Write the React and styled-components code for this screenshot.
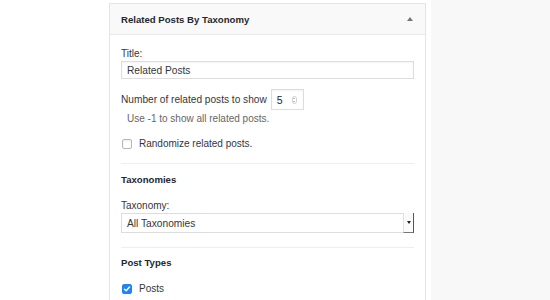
import React from "react";
import styled, { createGlobalStyle } from "styled-components";

const Global = createGlobalStyle`
  html, body { margin: 0; padding: 0; background: #fff; }
  body { font-family: "Liberation Sans", Arial, sans-serif; color: #23282d; }
  * { box-sizing: border-box; }
`;

const Page = styled.div`
  width: 550px;
  height: 300px;
  display: flex;
  background: #fff;
  overflow: hidden;
`;

const Gutter = styled.div`
  width: 109px;
  flex: none;
`;

const SideColumn = styled.div`
  flex: 1;
  margin-left: 5px;
  background: #f8f8f8;
`;

const Widget = styled.section`
  width: 317px;
  flex: none;
  margin-top: 3px;
  border: 1px solid #e5e5e5;
  border-bottom: none;
  background: #fff;
  box-shadow: 0 1px 1px rgba(0, 0, 0, 0.04);
`;

const Header = styled.header`
  height: 31px;
  display: flex;
  align-items: center;
  justify-content: space-between;
  padding: 0 12px 0 11px;
  background: #f9f9f9;
  border-bottom: 1px solid #e8e8e8;
`;

const HeaderTitle = styled.h3`
  margin: 0;
  font-size: 9.6px;
  font-weight: 700;
  color: #23282d;
`;

const Toggle = styled.span`
  width: 0;
  height: 0;
  margin-top: -1px;
  border-left: 3px solid transparent;
  border-right: 3px solid transparent;
  border-bottom: 4px solid #72777c;
`;

const Body = styled.div`
  padding: 13px 11px 0 11px;
  display: flex;
  flex-direction: column;
`;

const Label = styled.label`
  display: block;
  font-size: 10px;
  line-height: 12px;
  color: #32373c;
  margin-top: ${(p) => p.$mt || 0}px;
`;

const TextInput = styled.div`
  height: 18px;
  margin-top: 1px;
  border: 1px solid #dddddd;
  box-shadow: inset 0 1px 2px rgba(0, 0, 0, 0.05);
  padding: 0 5px;
  display: flex;
  align-items: center;
  font-size: 10.2px;
  color: #32373c;
`;

const NumberRow = styled.div`
  display: flex;
  align-items: center;
  gap: 4px;
  margin-top: 10px;
  font-size: 10.15px;
  color: #32373c;
`;

const NumberBox = styled.div`
  width: 33px;
  height: 21px;
  border: 1px solid #dddddd;
  box-shadow: inset 0 1px 2px rgba(0, 0, 0, 0.05);
  display: flex;
  align-items: center;
  justify-content: space-between;
  padding: 0 6px 0 5px;
  font-size: 10.5px;
  color: #23282d;
`;

const Spinner = styled.span`
  width: 5px;
  height: 8px;
  border-radius: 3px;
  border: 1px solid #cfcfcf;
  display: flex;
  flex-direction: column;
  align-items: center;
  justify-content: space-around;
  &::before, &::after {
    content: "";
    width: 0;
    height: 0;
    border-left: 1.5px solid transparent;
    border-right: 1.5px solid transparent;
  }
  &::before { border-bottom: 1.5px solid #777; }
  &::after { border-top: 1.5px solid #777; }
`;

const Hint = styled.p`
  margin: 3px 0 0 6px;
  font-size: 10px;
  line-height: 12px;
  color: #666;
`;

const CheckRow = styled.div`
  display: flex;
  align-items: center;
  gap: 7px;
  margin-top: ${(p) => p.$mt || 0}px;
  padding-left: 1px;
  font-size: 10px;
  line-height: 12px;
  color: #32373c;
`;

const Box = styled.span`
  width: 10px;
  height: 10px;
  border-radius: 2px;
  flex: none;
  display: flex;
  align-items: center;
  justify-content: center;
  border: 1px solid ${(p) => (p.$checked ? "#1f84f5" : "#b4b9be")};
  background: ${(p) => (p.$checked ? "#1f84f5" : "#fff")};
  box-shadow: ${(p) => (p.$checked ? "none" : "inset 0 1px 2px rgba(0,0,0,0.08)")};
`;

const Divider = styled.hr`
  border: none;
  border-top: 1px solid #eeeeee;
  height: 0;
  margin: ${(p) => p.$mt}px 0 0 0;
`;

const SectionTitle = styled.h4`
  margin: ${(p) => p.$mt}px 0 0 0;
  font-size: 9.6px;
  line-height: 12px;
  font-weight: 700;
  color: #23282d;
`;

const Select = styled.div`
  height: 20px;
  margin-top: 1px;
  border: 1px solid #dddddd;
  display: flex;
  align-items: stretch;
  font-size: 10.2px;
  color: #32373c;
`;

const SelectValue = styled.span`
  flex: 1;
  display: flex;
  align-items: center;
  padding-left: 5px;
`;

const SelectArrow = styled.span`
  width: 11px;
  flex: none;
  display: flex;
  align-items: center;
  justify-content: center;
  border-left: 1px solid #e2e2e2;
  border-right: 1px solid #555;
  border-bottom: 1px solid #777;
  margin: -1px -1px -1px 0;
  background: #fbfbfb;
  &::after {
    content: "";
    width: 0;
    height: 0;
    border-left: 2.5px solid transparent;
    border-right: 2.5px solid transparent;
    border-top: 3px solid #222;
  }
`;

export default function App() {
  return (
    <>
      <Global />
      <Page>
        <Gutter />
        <Widget>
          <Header>
            <HeaderTitle>Related Posts By Taxonomy</HeaderTitle>
            <Toggle />
          </Header>
          <Body>
            <Label>Title:</Label>
            <TextInput>Related Posts</TextInput>
            <NumberRow>
              <span>Number of related posts to show</span>
              <NumberBox>
                <span>5</span>
                <Spinner />
              </NumberBox>
            </NumberRow>
            <Hint>Use -1 to show all related posts.</Hint>
            <CheckRow $mt={13}>
              <Box />
              <span>Randomize related posts.</span>
            </CheckRow>
            <Divider $mt={13} />
            <SectionTitle $mt={10}>Taxonomies</SectionTitle>
            <Label $mt={14}>Taxonomy:</Label>
            <Select>
              <SelectValue>All Taxonomies</SelectValue>
              <SelectArrow />
            </Select>
            <Divider $mt={14} />
            <SectionTitle $mt={9}>Post Types</SectionTitle>
            <CheckRow $mt={14}>
              <Box $checked>
                <svg width="8" height="8" viewBox="0 0 8 8">
                  <path d="M1.5 4.2 L3.2 5.8 L6.5 2" fill="none" stroke="#fff" strokeWidth="1.5" strokeLinecap="round" strokeLinejoin="round" />
                </svg>
              </Box>
              <span>Posts</span>
            </CheckRow>
          </Body>
        </Widget>
        <SideColumn />
      </Page>
    </>
  );
}
